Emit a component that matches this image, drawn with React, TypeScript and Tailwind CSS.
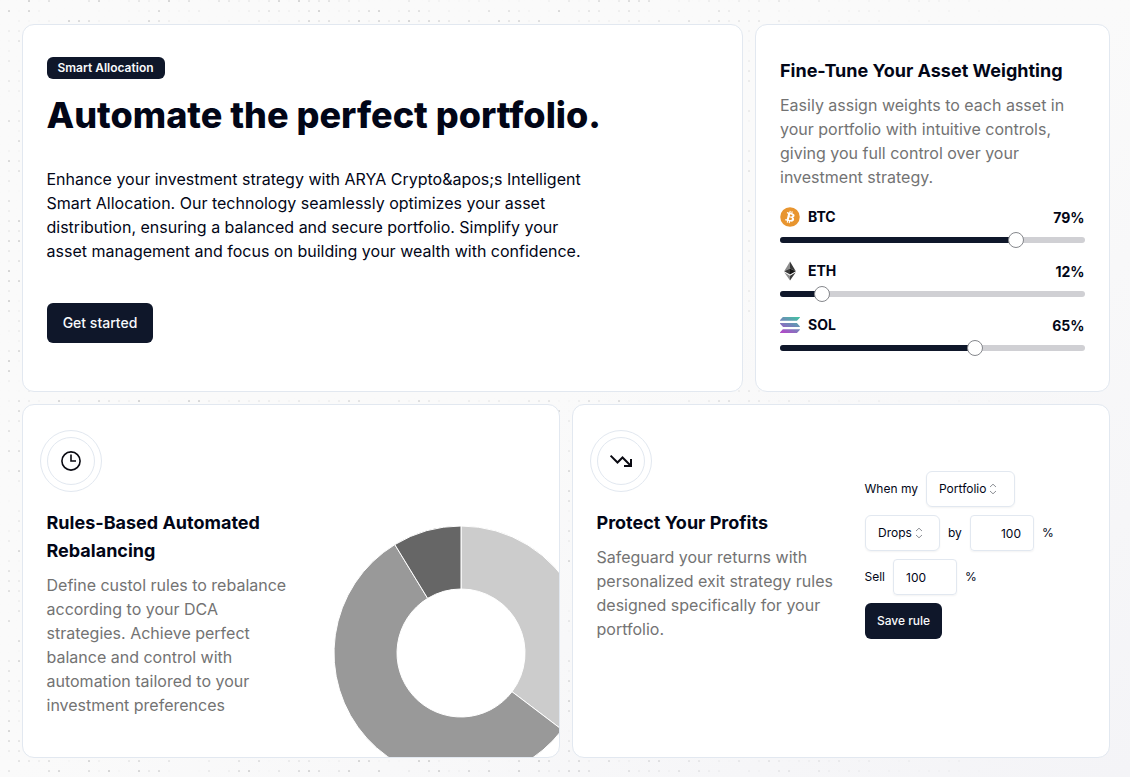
import type { ReactNode } from "react";

const ASSETS = [
  { symbol: "BTC", weight: 79, thumb: 236, icon: <BtcIcon /> },
  { symbol: "ETH", weight: 12, thumb: 42, icon: <EthIcon /> },
  { symbol: "SOL", weight: 65, thumb: 195, icon: <SolIcon /> },
];

function BtcIcon() {
  return (
    <svg width="20" height="20" viewBox="0 0 32 32">
      <circle cx="16" cy="16" r="15.6" fill="#e8952f" />
      <path
        fill="#fff"
        d="M23.2 14.1c.3-2.1-1.3-3.3-3.5-4l.7-2.9-1.7-.4-.7 2.8-1.4-.3.7-2.8-1.7-.5-.8 2.9-1.1-.3-2.4-.6-.4 1.9 1.2.3c.7.2.8.6.8 1l-2 7.9c-.1.2-.3.5-.8.4l-1.3-.3-.8 2 3.4.8-.7 2.9 1.7.4.7-2.8 1.4.3-.7 2.8 1.7.5.8-2.9c2.9.5 5.1.3 6-2.3.8-2.1 0-3.3-1.5-4.1 1.1-.3 2-1 2.3-2.5zm-3.9 5.5c-.5 2.1-4.1 1-5.3.7l1-3.8c1.1.3 4.8.8 4.3 3.1zm.6-5.5c-.5 1.9-3.5.9-4.4.7l.8-3.4c1 .2 4.1.7 3.6 2.7z"
      />
    </svg>
  );
}

function EthIcon() {
  return (
    <svg width="20" height="20" viewBox="0 0 20 20">
      <path d="M10 .5 4.2 10.2 10 7.6z" fill="#8c8c8c" />
      <path d="M10 .5v7.1l5.8 2.6z" fill="#393939" />
      <path d="M4.2 10.2 10 13.6v-6z" fill="#393939" />
      <path d="M15.8 10.2 10 13.6v-6z" fill="#141414" />
      <path d="M4.2 11.3 10 19.5v-4.8z" fill="#8c8c8c" />
      <path d="M15.8 11.3 10 19.5v-4.8z" fill="#3c3c3b" />
    </svg>
  );
}

function SolIcon() {
  return (
    <svg width="20" height="20" viewBox="0 0 20 20">
      <defs>
        <linearGradient id="sol" x1="15" y1="1" x2="6" y2="19" gradientUnits="userSpaceOnUse">
          <stop offset="0" stopColor="#45bfa4" />
          <stop offset="0.5" stopColor="#7385b9" />
          <stop offset="1" stopColor="#b04bc8" />
        </linearGradient>
      </defs>
      <g fill="url(#sol)">
        <path d="M3.2 2h16.3c.4 0 .6.4.3.7l-2.6 2.8c-.2.2-.4.3-.7.3H.4c-.4 0-.6-.4-.3-.7l2.5-2.8c.2-.2.4-.3.6-.3z" />
        <path d="M16.7 8.1H.4c-.4 0-.6.4-.3.7l2.5 2.8c.2.2.4.3.6.3h16.3c.4 0 .6-.4.3-.7l-2.5-2.8c-.2-.2-.4-.3-.6-.3z" />
        <path d="M3.2 14.2h16.3c.4 0 .6.4.3.7l-2.6 2.8c-.2.2-.4.3-.7.3H.4c-.4 0-.6-.4-.3-.7l2.5-2.8c.2-.2.4-.3.6-.3z" />
      </g>
    </svg>
  );
}

/** Dot grid of the page background; it fades out towards the right edge. */
function DotGrid() {
  const dots: ReactNode[] = [];
  for (let row = 0; row < 78; row++) {
    for (let col = 0; col < 104; col++) {
      const noise = Math.abs(Math.sin(row * 12.9898 + col * 78.233) * 43758.5453) % 1;
      const fade = col < 50 ? 1 : 1 - (col - 50) / 54;
      const alpha = noise * noise * 0.16 * fade;
      if (alpha < 0.008) continue;
      dots.push(<rect key={`${row}-${col}`} x={col * 10 + 8} y={row * 10} width="2" height="2" rx="0.5" fill="#000" opacity={alpha} />);
    }
  }
  return <svg className="absolute inset-0" width="1130" height="777">{dots}</svg>;
}

function Card({ className, children }: { className: string; children: ReactNode }) {
  return <div className={`overflow-hidden rounded-xl border border-slate-200 bg-white px-6 ${className}`}>{children}</div>;
}

function RingIcon({ children }: { children: ReactNode }) {
  return (
    <div className="-ml-[7px] flex size-[62px] items-center justify-center rounded-full border border-slate-200">
      <div className="flex size-12 items-center justify-center rounded-full border border-slate-200">
        <svg width="24" height="24" viewBox="0 0 24 24" fill="none" stroke="#0a0a12">
          {children}
        </svg>
      </div>
    </div>
  );
}

function point(deg: number, r: number) {
  const a = (deg * Math.PI) / 180;
  return `${127 + r * Math.sin(a)} ${127 - r * Math.cos(a)}`;
}

function Slice({ from, to, fill }: { from: number; to: number; fill: string }) {
  const large = to - from > 180 ? 1 : 0;
  return (
    <path
      d={`M${point(from, 127)} A127 127 0 ${large} 1 ${point(to, 127)} L${point(to, 64)} A64 64 0 ${large} 0 ${point(from, 64)} Z`}
      fill={fill}
      stroke="#fff"
      strokeWidth="1"
    />
  );
}

function Select({ label, className }: { label: string; className: string }) {
  return (
    <button className={`flex h-9 items-center gap-[3px] rounded-md border border-slate-200 pl-3 shadow-xs ${className}`}>
      {label}
      <svg className="-ml-px" width="10" height="12" viewBox="0 0 10 12" fill="none" stroke="#8d9096" strokeWidth="1">
        <path d="M2 4 5 1.2 8 4M2 8l3 2.8L8 8" />
      </svg>
    </button>
  );
}

export default function App() {
  return (
    <div className="relative h-[777px] w-[1130px] overflow-hidden bg-linear-to-br from-[#fafafa] from-50% to-[#f4f4f7] font-['Inter',sans-serif] text-[#020617]">
      <DotGrid />
      <main className="relative flex flex-col gap-3 pt-6 pl-[22px]">
        <div className="flex gap-3">
          <Card className="h-[368px] w-[721px] pt-8">
            <span className="flex h-[22px] w-[118px] items-center justify-center rounded-md bg-[#0f172a] pr-px text-xs font-semibold text-slate-50">
              Smart Allocation
            </span>
            <h1 className="mt-4 -ml-[0.5px] text-4xl font-extrabold">Automate the perfect portfolio.</h1>
            <p className="mt-8 -ml-[0.5px] w-[560px]">
              Enhance your investment strategy with ARYA Crypto&amp;apos;s Intelligent
              <br />
              Smart Allocation. Our technology seamlessly optimizes your asset
              <br />
              distribution, ensuring a balanced and secure portfolio. Simplify your
              <br />
              asset management and focus on building your wealth with confidence.
            </p>
            <button className="mt-10 h-10 w-[106px] rounded-md bg-[#0f172a] text-sm font-medium text-slate-50">Get started</button>
          </Card>

          <Card className="h-[368px] w-[355px] pt-8">
            <h2 className="text-lg font-bold whitespace-nowrap">Fine-Tune Your Asset Weighting</h2>
            <p className="mt-2 w-[300px] text-[#737373]">
              Easily assign weights to each asset in your portfolio with intuitive controls, giving you full control over your investment strategy.
            </p>
            <div className="mt-[18px] flex flex-col gap-[18px]">
              {ASSETS.map((a) => (
                <div key={a.symbol} className="h-9">
                  <div className="flex h-5 items-center gap-2 text-sm font-bold">
                    {a.icon}
                    <span>{a.symbol}</span>
                    <span className="mt-0.5 ml-auto pr-[0.5px]">{a.weight}%</span>
                  </div>
                  <div className="relative mt-2.5 h-1.5 rounded-full bg-[#d0d0d4]">
                    <div className="h-full rounded-full bg-[#0f172a]" style={{ width: a.thumb }} />
                    <div
                      className="absolute -top-[5px] size-4 -translate-x-1/2 rounded-full border border-[#85878c] bg-white"
                      style={{ left: a.thumb }}
                    />
                  </div>
                </div>
              ))}
            </div>
          </Card>
        </div>

        <div className="flex gap-3">
          <Card className="relative h-[354px] w-[538px] pt-[25px]">
            <RingIcon>
              <circle cx="12" cy="12" r="9.1" strokeWidth="1.6" />
              <path d="M12 5.5V12h5" strokeWidth="1.6" />
            </RingIcon>
            <h2 className="mt-[17px] -ml-[0.5px] w-[240px] text-lg font-bold">Rules-Based Automated Rebalancing</h2>
            <p className="mt-2 -ml-[0.5px] w-[245px] text-[#737373]">
              Define custol rules to rebalance according to your DCA strategies. Achieve perfect balance and control with automation tailored to your investment preferences
            </p>
            <svg className="absolute top-[121px] left-[311px] overflow-visible" width="254" height="254">
              <Slice from={0} to={127.2} fill="#ccc" />
              <Slice from={127.2} to={328.6} fill="#999" />
              <Slice from={328.6} to={360} fill="#666" />
            </svg>
          </Card>

          <Card className="flex h-[354px] w-[538px] pt-[25px]">
            <div className="w-[268px]">
              <RingIcon>
                <path d="M1.6 6.6 8.5 13.5l5-5 8 8M22 10v7h-7" strokeWidth="2" />
              </RingIcon>
              <h2 className="mt-[17px] -ml-[0.5px] text-lg font-bold">Protect Your Profits</h2>
              <p className="mt-2 -ml-[0.5px] w-[242px] text-[#737373]">
                Safeguard your returns with personalized exit strategy rules designed specifically for your portfolio.
              </p>
            </div>
            <div className="flex flex-col gap-2 pt-[41px] text-xs">
              <div className="flex items-center">
                <span className="-ml-[0.5px] w-[61.5px]">When my</span>
                <Select label="Portfolio" className="w-[89px]" />
              </div>
              <div className="flex items-center">
                <Select label="Drops" className="w-[75px]" />
                <span className="w-[30px] pl-2">by</span>
                <input className="h-9 w-16 rounded border border-slate-200 px-3 text-right shadow-xs" defaultValue="100" />
                <span className="pl-2">%</span>
              </div>
              <div className="flex items-center">
                <span className="-ml-[0.5px] w-[28.5px]">Sell</span>
                <input className="h-9 w-16 rounded border border-slate-200 px-3 shadow-xs" defaultValue="100" />
                <span className="pl-2">%</span>
              </div>
              <button className="h-9 w-[77px] rounded-md bg-[#0f172a] font-medium text-slate-50">Save rule</button>
            </div>
          </Card>
        </div>
      </main>
    </div>
  );
}
